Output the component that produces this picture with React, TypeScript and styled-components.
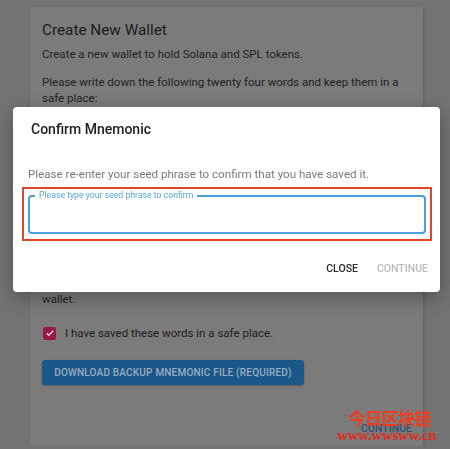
import React from "react";
import styled, { createGlobalStyle } from "styled-components";

const GlobalStyle = createGlobalStyle`
  html, body {
    margin: 0;
    padding: 0;
    background-color: #737373;
    font-family: Roboto, "Liberation Sans", sans-serif;
  }
`;

const Page = styled.div`
  padding: 7px 0 0 30px;
`;

const Card = styled.div`
  box-sizing: border-box;
  width: 393px;
  height: 439px;
  padding: 11px 4px 0 12px;
  background-color: #7b7b7b;
  border-radius: 3px;
  box-shadow: 1px 1px 3px rgba(0, 0, 0, 0.18);
  display: flex;
  flex-direction: column;
  color: #1f1f1f;
`;

const Title = styled.h1`
  margin: 0;
  font-size: 15.3px;
  font-weight: 400;
  line-height: 24px;
  color: #1c1c1c;
`;

const Text = styled.p<{ gap?: number }>`
  margin: ${({ gap }) => gap ?? 12}px 0 0;
  font-size: 11.5px;
  line-height: 16px;
  color: #232323;
`;

const WordsBox = styled.div`
  margin-top: 12px;
  height: 140px;
  border: 1px solid #6a6a6a;
  border-radius: 3px;
`;

const CheckRow = styled.label`
  margin-top: 18px;
  display: flex;
  align-items: center;
  gap: 9px;
  font-size: 11.5px;
  line-height: 16px;
  color: #202020;
`;

const Check = styled.span`
  width: 13px;
  height: 13px;
  margin-left: 1px;
  border-radius: 2px;
  background-color: #951a49;
  display: flex;
  align-items: center;
  justify-content: center;
`;

const DownloadButton = styled.button`
  margin-top: 19px;
  width: 262px;
  height: 25px;
  border: none;
  border-radius: 3px;
  background-color: #1b5889;
  box-shadow: 0 1px 2px rgba(0, 0, 0, 0.25);
  color: #98acbf;
  font-family: Roboto, "Liberation Sans", sans-serif;
  font-size: 10px;
  font-weight: 500;
  letter-spacing: 0.2px;
  padding: 0;
`;

const Footer = styled.div`
  margin-top: 36px;
  padding-right: 7px;
  display: flex;
  justify-content: flex-end;
`;

const FlatButton = styled.span<{ tone: string }>`
  font-size: 10.5px;
  font-weight: 500;
  line-height: 16px;
  color: ${({ tone }) => tone};
`;

const Overlay = styled.div`
  position: fixed;
  inset: 0;
  padding: 107px 0 0 13px;
`;

const Dialog = styled.div`
  box-sizing: border-box;
  width: 427px;
  height: 185px;
  background-color: #ffffff;
  border-radius: 4px;
  box-shadow: 0 6px 20px rgba(0, 0, 0, 0.3);
  padding: 12px 12px 0 9px;
  display: flex;
  flex-direction: column;
`;

const DialogTitle = styled.h2`
  margin: 0 0 0 9px;
  font-size: 14px;
  font-weight: 500;
  line-height: 20px;
  color: #212121;
`;

const DialogText = styled.p`
  margin: 26px 0 0 6px;
  font-size: 11.6px;
  line-height: 18px;
  color: #7a7a7a;
`;

const Highlight = styled.div`
  margin-top: 4px;
  width: 410px;
  box-sizing: border-box;
  padding: 6px 5px 5px 4px;
  border: 2px solid #e0452b;
`;

const Field = styled.div`
  position: relative;
  box-sizing: border-box;
  width: 398px;
  height: 39px;
  border: 2px solid #4d9edb;
  border-radius: 4px;
`;

const FieldLabel = styled.span`
  position: absolute;
  top: -7px;
  left: 5px;
  padding: 0 4px;
  background-color: #ffffff;
  font-size: 8.7px;
  line-height: 11px;
  color: #5aa6de;
`;

const Actions = styled.div`
  margin-top: 20px;
  display: flex;
  justify-content: flex-end;
  gap: 19px;
`;

const Watermark = styled.div`
  position: fixed;
  left: 337px;
  top: 408px;
  display: flex;
  flex-direction: column;
  align-items: center;
`;

const MarkCn = styled.span`
  margin-left: 6px;
  font-family: "Noto Sans CJK SC", sans-serif;
  font-size: 17px;
  font-weight: 700;
  line-height: 20px;
  letter-spacing: -0.5px;
  color: #f23c1d;
`;

const MarkUrl = styled.span`
  font-family: "Liberation Serif", serif;
  font-size: 14.5px;
  font-weight: 700;
  line-height: 14px;
  color: #e8261b;
`;

export default function App() {
  return (
    <>
      <GlobalStyle />
      <Page>
        <Card>
          <Title>Create New Wallet</Title>
          <Text gap={4}>Create a new wallet to hold Solana and SPL tokens.</Text>
          <Text>
            Please write down the following twenty four words and keep them in a
            safe place:
          </Text>
          <WordsBox />
          <Text gap={15}>
            Your private keys are only stored on your current computer or device.
            <br />
            wallet.
          </Text>
          <CheckRow>
            <Check>
              <svg width="10" height="10" viewBox="0 0 24 24">
                <path
                  d="M4 12.5l5 5L20 6.5"
                  fill="none"
                  stroke="#e6cdd6"
                  strokeWidth="3"
                />
              </svg>
            </Check>
            I have saved these words in a safe place.
          </CheckRow>
          <div>
            <DownloadButton>DOWNLOAD BACKUP MNEMONIC FILE (REQUIRED)</DownloadButton>
          </div>
          <Footer>
            <FlatButton tone="#33506f">CONTINUE</FlatButton>
          </Footer>
        </Card>
      </Page>
      <Overlay>
        <Dialog>
          <DialogTitle>Confirm Mnemonic</DialogTitle>
          <DialogText>
            Please re-enter your seed phrase to confirm that you have saved it.
          </DialogText>
          <Highlight>
            <Field>
              <FieldLabel>Please type your seed phrase to confirm</FieldLabel>
            </Field>
          </Highlight>
          <Actions>
            <FlatButton tone="#2b2b2b">CLOSE</FlatButton>
            <FlatButton tone="#bdbdbd">CONTINUE</FlatButton>
          </Actions>
        </Dialog>
      </Overlay>
      <Watermark>
        <MarkCn>今日区块链</MarkCn>
        <MarkUrl>www.wwsww.cn</MarkUrl>
      </Watermark>
    </>
  );
}
